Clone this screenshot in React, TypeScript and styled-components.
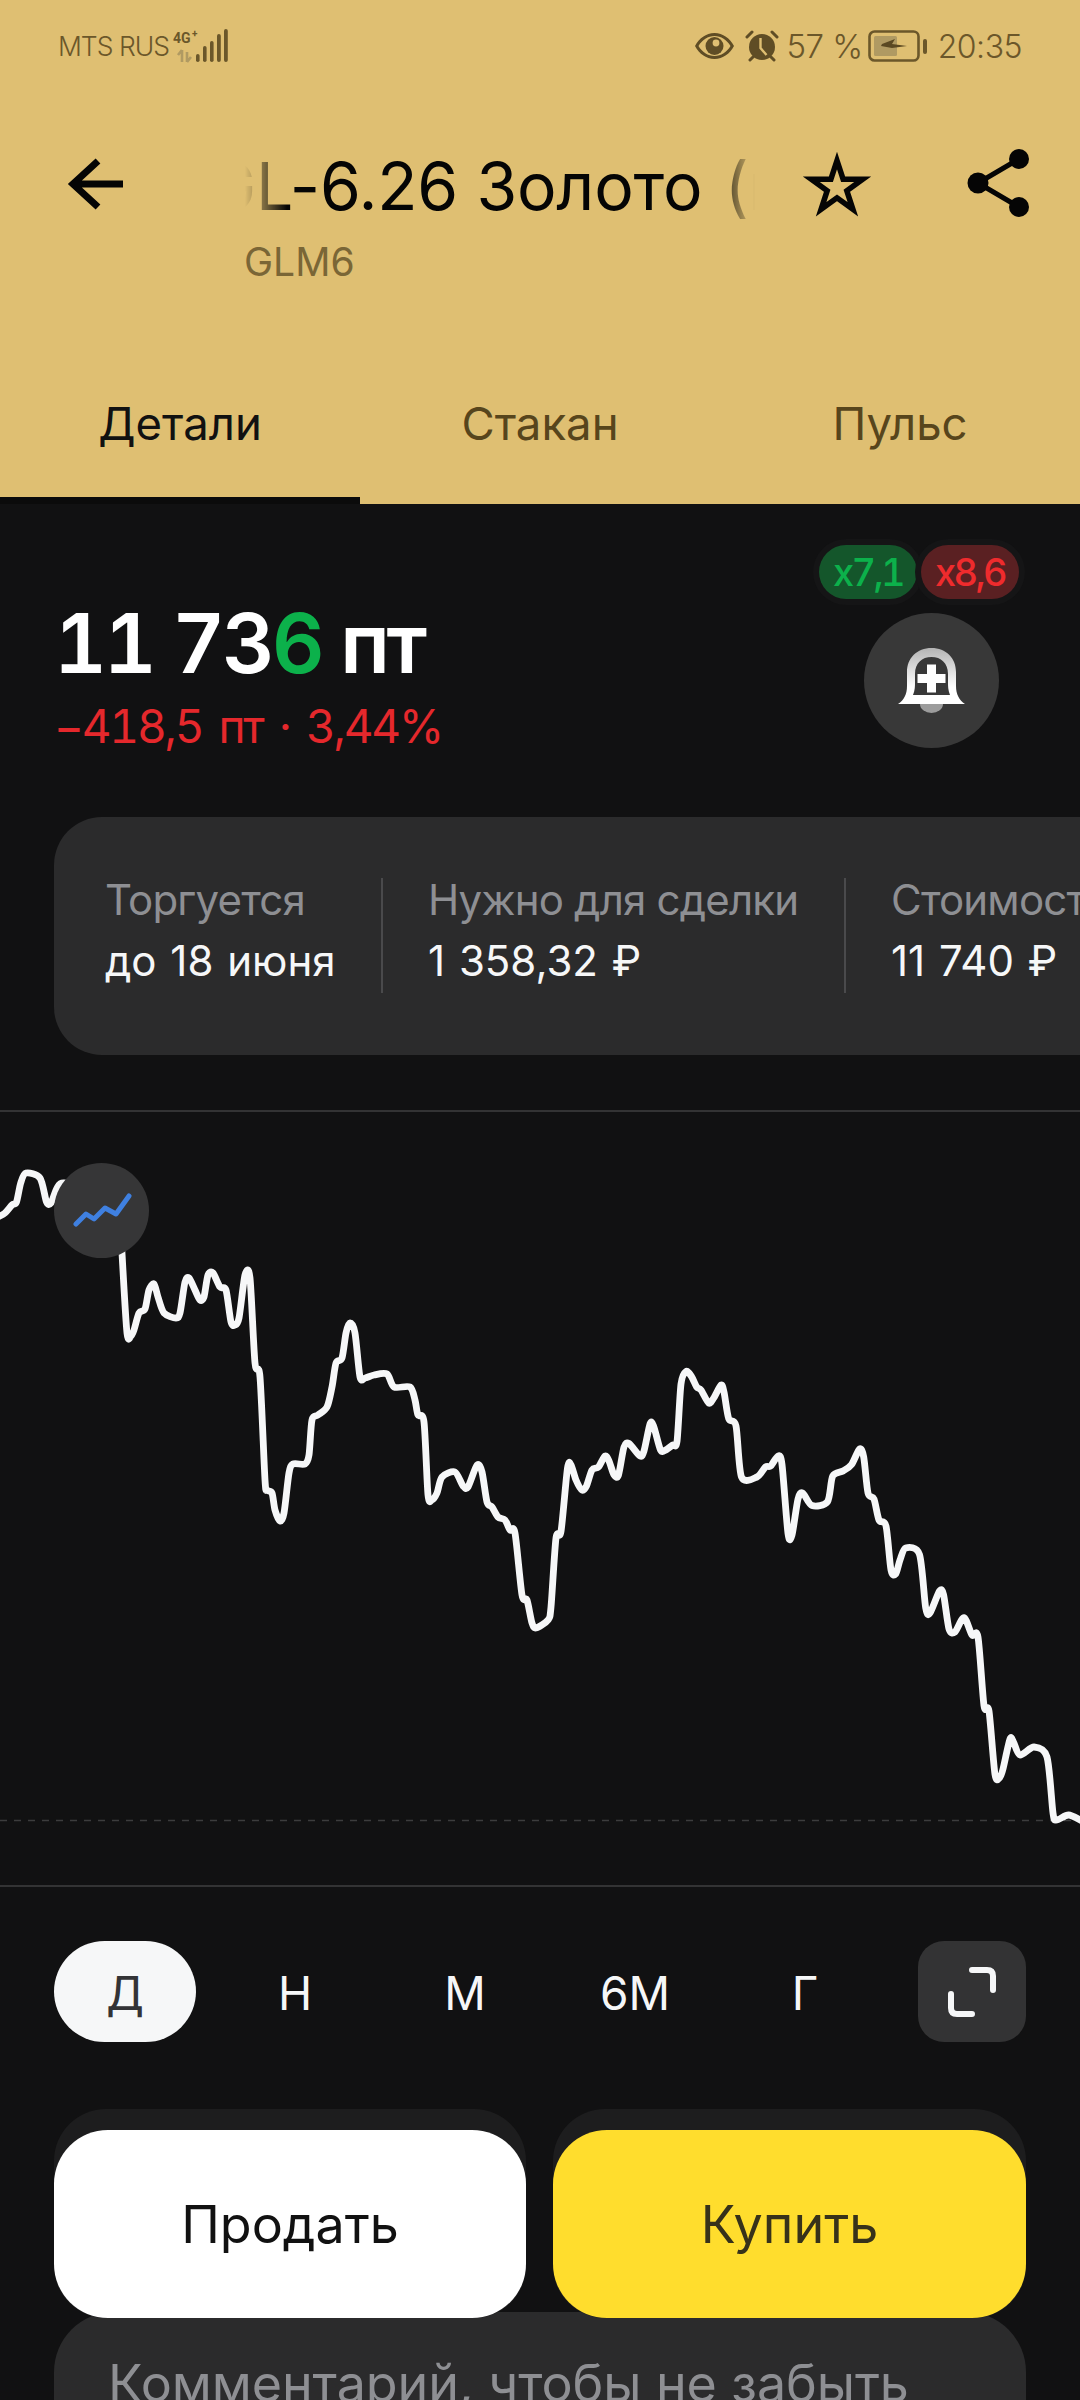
import React from "react";
import styled, { createGlobalStyle } from "styled-components";

const Global = createGlobalStyle`
  html, body { margin: 0; padding: 0; background: #111112; width: 1080px; height: 2400px; overflow: hidden; }
  #root { width: 1080px; height: 2400px; overflow: hidden; }
  * { box-sizing: border-box; }
`;

const Page = styled.div`
  width: 1080px; height: 2400px; overflow: hidden; background: #111112;
  font-family: Inter, "Noto Sans", sans-serif; color: #fff;
`;
const Header = styled.header`
  background: #dfbf72; height: 504px; display: flex; flex-direction: column;
`;
const StatusBar = styled.div`
  height: 92px; display: flex; align-items: center; justify-content: space-between;
  padding: 0 58px; color: #6b572a; font-size: 28px; font-weight: 300;
`;
const StatusGroup = styled.div`display: flex; align-items: center;`;
const Carrier = styled.span`font-size: 26.5px; letter-spacing: -1px;`;
const Percent = styled.span`font-size: 33px; margin: 0 5px 0 7px; letter-spacing: -0.5px;`;
const Clock = styled.span`font-size: 32px; margin-left: 10px; letter-spacing: -0.5px;`;
const NavBar = styled.div`
  display: grid; grid-template-columns: 245px 510px 1fr; height: 158px; padding-top: 53px;
`;
const BackCell = styled.div`padding: 12px 0 0 65px;`;
const TitleBlock = styled.div`display: flex; flex-direction: column; min-width: 0;`;
const TitleClip = styled.div`
  height: 82px; overflow: hidden; white-space: nowrap;
  mask-image: linear-gradient(90deg, transparent 0, #000 42px, #000 468px, transparent 510px);
`;
const TitleText = styled.div`
  font-size: 66px; line-height: 82px; color: #050505; margin-left: -38px; letter-spacing: -0.2px;
`;
const Paren = styled.span`margin-left: 4px;`;
const Ticker = styled.div`font-size: 39px; line-height: 46px; color: #7a6636; margin: 12px 0 0 -1px;`;
const Actions = styled.div`display: flex; align-items: flex-start; padding: 3px 0 0 46px; gap: 94px;`;
const Tabs = styled.nav`display: grid; grid-template-columns: repeat(3, 360px); margin-top: auto;`;
const Tab = styled.div<{ $active?: boolean }>`
  height: 154px; display: flex; align-items: center; justify-content: center;
  font-size: 45.5px; color: ${(p) => (p.$active ? "#111" : "#57451c")};
  border-bottom: 7px solid ${(p) => (p.$active ? "#0b0b0b" : "transparent")};
`;
const Quote = styled.section`
  height: 313px; display: flex; justify-content: space-between; padding: 41px 54px 0 54px;
`;
const PriceCol = styled.div`padding-top: 59px;`;
const Price = styled.div`
  font-size: 82px; line-height: 80px; font-weight: 600; font-variant-numeric: tabular-nums; letter-spacing: -3.3px;
`;
const LastDigit = styled.span`color: #0cb14b;`;
const Change = styled.div`
  font-size: 46px; line-height: 56px; color: #e5282c; margin-top: 14px; letter-spacing: -2.2px;
  font-variant-numeric: tabular-nums; word-spacing: 6px;
`;
const AlertCol = styled.div`display: flex; flex-direction: column; align-items: flex-end; padding-right: 7px;`;
const Pills = styled.div`display: flex; gap: 4px;`;
const Pill = styled.div<{ $up?: boolean }>`
  height: 54px; min-width: 98px; padding: 0 8px; border-radius: 27px; display: flex; align-items: center;
  justify-content: center; font-size: 38px; font-weight: 500; font-variant-numeric: tabular-nums; letter-spacing: -2.6px;
  color: ${(p) => (p.$up ? "#0cb14b" : "#ef2b2d")};
  background: ${(p) => (p.$up ? "#14562b" : "#5a2022")};
  box-shadow: 0 0 0 6px #151516;
`;
const BellButton = styled.div`
  width: 135px; height: 135px; border-radius: 50%; background: #383838; margin: 14px 20px 0 0;
  display: flex; align-items: center; justify-content: center;
`;
const StatsCard = styled.section`
  margin-left: 54px; width: 1100px; height: 238px; background: #2b2b2c; border-radius: 48px 0 0 48px;
  display: flex; align-items: center; padding: 0 0 2px 51px;
`;
const Stat = styled.div<{ $w: number }>`
  width: ${(p) => p.$w}px; flex: none; margin-top: -6px;
`;
const StatLabel = styled.div`
  font-size: 42px; line-height: 58px; color: #8e8f93; white-space: nowrap; letter-spacing: -0.8px;
`;
const StatValue = styled.div`
  font-size: 42px; line-height: 64px; color: #f6f7f8; white-space: nowrap; word-spacing: 2px;
`;
const StatDivider = styled.div`width: 2px; height: 115px; background: #4a4a4c; flex: none; margin: 0 45px 0 0;`;
const Chart = styled.section`
  position: relative; margin-top: 55px; height: 777px;
  border-top: 2px solid #333334; border-bottom: 2px solid #333334;
`;
const ChartSvg = styled.svg`display: block; width: 1080px; height: 773px;`;
const ChartToggle = styled.div`
  position: absolute; left: 54px; top: 51px; width: 95px; height: 95px; border-radius: 50%;
  background: #363637; display: flex; align-items: center; justify-content: center;
`;
const Periods = styled.div`display: flex; gap: 28px; padding: 54px 54px 0;`;
const Period = styled.div<{ $active?: boolean }>`
  width: 142px; height: 101px; border-radius: 51px; display: flex; align-items: center; justify-content: center;
  font-size: 46px; padding-top: 2px; color: ${(p) => (p.$active ? "#333336" : "#f6f7f8")};
  background: ${(p) => (p.$active ? "#f6f7f8" : "transparent")};
`;
const Expand = styled.div`
  margin-left: auto; width: 108px; height: 101px; border-radius: 26px; background: #333334;
  display: flex; align-items: center; justify-content: center;
`;
const Trade = styled.div`
  position: relative; z-index: 1; display: grid; grid-template-columns: 472px 473px; gap: 27px;
  padding: 67px 54px 0;
`;
const TradeSlot = styled.div`background: #1d1d1e; border-radius: 52px; padding-top: 21px;`;
const TradeButton = styled.div<{ $buy?: boolean }>`
  height: 188px; border-radius: 54px; display: flex; align-items: center; justify-content: center;
  font-size: 52px; color: ${(p) => (p.$buy ? "#37321a" : "#111")};
  background: ${(p) => (p.$buy ? "#ffdd2d" : "#fff")};
`;
const Comment = styled.div`
  margin: -6px 54px 0; height: 140px; border-radius: 60px 60px 0 0; background: #2b2b2c;
  padding: 42px 0 0 54px; font-size: 52px; line-height: 60px; color: #8e8f93; white-space: nowrap; letter-spacing: -0.1px;
`;

const pts: [number, number][] = [
  [-2,1217],[5,1213],[12,1205],[16.5,1202],[20.7,1183],[26,1173],[40,1178],[46.5,1202],[51,1203],[57,1188],[64,1183],[90,1190],[116,1200],[121,1235],[122,1253],
  [127,1333],[131,1336],[134,1330],[139,1313],[145,1309],[149,1290],[154,1284],[158,1297],[164,1313],[176,1318],[180,1313],[185,1282],[189,1278],[195,1290],[200,1300],[204,1297],[208,1275],[213,1273],[220,1287],[226,1290],[231,1322],[235,1325],[239,1318],[245,1275],[250,1278],[255,1363],[260,1377],[265,1480],
  [267,1490],[272,1493],[275,1510],[280,1521],[284,1513],[289,1473],[293,1464],[305,1464],[309,1455],[312,1420],[318,1415],[327,1407],[332,1387],[336,1363],[342,1358],[346,1333],[350,1323],[355,1333],[360,1377],[365,1378],[374,1375],[387,1374],[394,1387],[410,1387],[415,1400],[418,1415],[424,1422],
  [428,1495],[432,1500],[437,1493],[442,1477],[455,1472],[463,1486],[468,1487],[477,1465],[482,1472],[487,1502],[492,1507],[498,1517],[505,1520],[510,1530],[515,1533],[522,1595],[527,1600],[532,1623],[536,1628],[548,1620],[551,1607],[556,1538],[561,1531.5],
  [567.5,1468],[571,1465],[576,1480],[582,1490],[586.5,1486],[592,1470],[598.5,1467],[605,1456],[609,1461],[614,1475],[618.5,1475],[624,1447],[629,1443.5],[640,1456],[644,1451],[650,1424],[653.6,1426],[660.5,1450],[665.7,1450],[672.6,1445],[677,1441.6],[681,1384],[686,1371.5],[691.5,1376.5],[696.7,1387],[701,1390],[708.7,1403],[714,1397.6],[721,1385],[724,1392],[728.7,1418.6],[736,1426],[741.5,1477],[757,1477],[765.5,1467],[770.7,1466],[778,1456],[782,1464.5],[788,1533.5],[792,1535],[798,1499],[802.7,1493],[812,1505.5],[827.5,1501.7],[832.7,1476],[843,1471],[851.6,1464.5],[859.6,1449],[863.7,1457],[868,1493],[874,1499],[879,1520],[886,1526],[891,1570],[895.7,1574],[900,1560],[905.7,1548],[919.5,1554.5],[925.7,1608],[930,1613],[939.5,1591],[943.6,1594.7],[949,1629],[955,1632],[964,1617.6],[972,1635],[978,1637],[984,1705.7],[989,1711],[995,1774.5],[999.7,1777.6],[1003,1769],[1010,1739],[1013.5,1742],[1020,1755],[1034,1747],[1047,1757],[1053,1813],[1056.5,1820],[1068.6,1815],[1082,1821],
];

function smooth(p: [number, number][]): string {
  let d = `M${p[0][0]} ${p[0][1]}`;
  const k = 0.14;
  for (let i = 0; i < p.length - 1; i++) {
    const a = p[Math.max(0, i - 1)], b = p[i], c = p[i + 1], e = p[Math.min(p.length - 1, i + 2)];
    d += `C${(b[0] + (c[0] - a[0]) * k).toFixed(1)} ${(b[1] + (c[1] - a[1]) * k).toFixed(1)} ${(c[0] - (e[0] - b[0]) * k).toFixed(1)} ${(c[1] - (e[1] - b[1]) * k).toFixed(1)} ${c[0]} ${c[1]}`;
  }
  return d;
}

const SignalSvg = styled.svg`margin-left: 3px;`;
const EyeSvg = styled.svg`margin-right: 11px;`;

const Signal = () => (
  <SignalSvg width="62" height="36" viewBox="0 0 62 36">
    <text x="1" y="15" fontFamily="Roboto, sans-serif" fontWeight="700" fontSize="14" fill="#6b572a">4G</text>
    <text x="20" y="9" fontFamily="Roboto, sans-serif" fontWeight="700" fontSize="10" fill="#6b572a">+</text>
    <path d="M10 34V22M10 22l-4 5M15 24v10M15 34l4-5" stroke="#b09a62" strokeWidth="2.6" fill="none" />
    <g fill="#6b572a">
      <rect x="24" y="26" width="3.6" height="8" rx="1.8" />
      <rect x="31" y="18" width="3.6" height="16" rx="1.8" />
      <rect x="38" y="13" width="3.6" height="21" rx="1.8" />
      <rect x="45" y="6" width="3.8" height="28" rx="1.9" />
      <rect x="52" y="1" width="3.8" height="33" rx="1.9" />
    </g>
  </SignalSvg>
);
const Eye = () => (
  <EyeSvg width="39" height="26" viewBox="0 0 39 26">
    <path fillRule="evenodd" fill="#5f4d25" d="M19.500 0C28 0 35 5.500 39 13 35 20.500 28 26 19.500 26S4 20.500 0 13C4 5.500 11 0 19.500 0ZM19.500 3C13 3 7 7 3.500 13 7 19 13 23 19.500 23S32 19 35.500 13C32 7 26 3 19.500 3Z" />
    <circle cx="19.500" cy="13" r="9" fill="#5f4d25" />
    <circle cx="21" cy="10" r="3.400" fill="#dfbf72" />
  </EyeSvg>
);
const Alarm = () => (
  <svg width="34" height="32" viewBox="0 0 34 32">
    <circle cx="17" cy="17" r="13" fill="#5f4d25" />
    <path d="M15.500 8v10l6 7" stroke="#dfbf72" strokeWidth="2.400" fill="none" />
    <path d="M2 7l5-5M32 7l-5-5M5 30l3-3M29 30l-3-3" stroke="#5f4d25" strokeWidth="3" strokeLinecap="round" fill="none" />
  </svg>
);
const Battery = () => (
  <svg width="60" height="32" viewBox="0 0 60 32">
    <rect x="1.500" y="1.500" width="49" height="29" rx="5" fill="none" stroke="#6b572a" strokeWidth="2.600" />
    <rect x="6" y="6" width="23" height="20" rx="1.500" fill="#b09a62" />
    <path d="M14 14l13-5-3 5 15 2-15 2-11-2z" fill="#5a4822" />
    <rect x="55" y="9" width="4" height="15" rx="2" fill="#6b572a" />
  </svg>
);
const Back = () => (
  <svg width="60" height="56" viewBox="0 0 60 56">
    <path d="M8 27h50M33 4 8 27l25 23" fill="none" stroke="#050505" strokeWidth="7" />
  </svg>
);
const Star = () => (
  <svg width="72" height="72" viewBox="0 0 72 72">
    <path d="M36 12.500 42.100 31.200 61.700 31.200 45.800 42.700 51.900 61.300 36 49.800 20.100 61.300 26.200 42.700 10.300 31.200 29.900 31.200Z" fill="none" stroke="#050505" strokeWidth="5.500" />
  </svg>
);
const Share = () => (
  <svg width="64" height="72" viewBox="0 0 64 72">
    <path d="M52 11 11 35 52 59" fill="none" stroke="#050505" strokeWidth="5" />
    <circle cx="52" cy="11" r="10" fill="#050505" />
    <circle cx="11" cy="35" r="10.500" fill="#050505" />
    <circle cx="52" cy="59" r="10" fill="#050505" />
  </svg>
);
const Bell = () => (
  <svg width="67" height="66" viewBox="0 0 67 66">
    <defs>
      <linearGradient id="bellFill" x1="0" y1="0" x2="0" y2="1">
        <stop offset="0" stopColor="#b4b4b4" />
        <stop offset="0.7" stopColor="#ffffff" />
      </linearGradient>
    </defs>
    <path fill="#9c9c9c" d="M22 56h23a11.500 9 0 0 1-23 0Z" />
    <path fill="url(#bellFill)" fillRule="evenodd" d="M0 56C6 52 9 46 9 38V24C9 10 19 0 33.500 0S58 10 58 24V38C58 46 61 52 67 56ZM15 47H52C50 42 50 38 50 34V26C50 15 43 9 33.500 9S17 15 17 26V34C17 38 17 42 15 47Z" />
    <path fill="#fff" d="M29 16.500h9V26h9.500v9H38v9.500h-9V35h-9.500v-9H29Z" />
  </svg>
);
const Trend = () => (
  <svg width="60" height="40" viewBox="0 0 60 40">
    <path d="M4 33 14 23 22 28 33 17 44 23 57 5" fill="none" stroke="#3f80e0" strokeWidth="5" strokeLinecap="round" strokeLinejoin="round" />
  </svg>
);
const ExpandIcon = () => (
  <svg width="50" height="50" viewBox="0 0 50 50">
    <path d="M25 3H40Q46 3 46 9V23M4 27V41Q4 47 10 47H25" fill="none" stroke="#f6f7f8" strokeWidth="6" strokeLinecap="round" />
  </svg>
);

export default function App() {
  return (
    <Page>
      <Global />
      <Header>
        <StatusBar>
          <StatusGroup>
            <Carrier>MTS RUS</Carrier>
            <Signal />
          </StatusGroup>
          <StatusGroup>
            <Eye />
            <Alarm />
            <Percent>57 %</Percent>
            <Battery />
            <Clock>20:35</Clock>
          </StatusGroup>
        </StatusBar>
        <NavBar>
          <BackCell><Back /></BackCell>
          <TitleBlock>
            <TitleClip><TitleText>GL-6.26 Золото <Paren>(мини)</Paren></TitleText></TitleClip>
            <Ticker>GLM6</Ticker>
          </TitleBlock>
          <Actions>
            <Star />
            <Share />
          </Actions>
        </NavBar>
        <Tabs>
          <Tab $active>Детали</Tab>
          <Tab>Стакан</Tab>
          <Tab>Пульс</Tab>
        </Tabs>
      </Header>
      <Quote>
        <PriceCol>
          <Price>11 73<LastDigit>6</LastDigit> пт</Price>
          <Change>−418,5 пт · 3,44%</Change>
        </PriceCol>
        <AlertCol>
          <Pills>
            <Pill $up>x7,1</Pill>
            <Pill>x8,6</Pill>
          </Pills>
          <BellButton><Bell /></BellButton>
        </AlertCol>
      </Quote>
      <StatsCard>
        <Stat $w={276}>
          <StatLabel>Торгуется</StatLabel>
          <StatValue>до 18 июня</StatValue>
        </Stat>
        <StatDivider />
        <Stat $w={416}>
          <StatLabel>Нужно для сделки</StatLabel>
          <StatValue>1 358,32 ₽</StatValue>
        </Stat>
        <StatDivider />
        <Stat $w={300}>
          <StatLabel>Стоимость</StatLabel>
          <StatValue>11 740 ₽</StatValue>
        </Stat>
      </StatsCard>
      <Chart>
        <ChartSvg viewBox="0 1112 1080 773">
          <line x1="0" x2="1080" y1="1820.500" y2="1820.500" stroke="#3c3c3d" strokeWidth="1.500" strokeDasharray="7 7" />
          <path d={smooth(pts)} fill="none" stroke="#f6f7f8" strokeWidth="6.800" strokeLinejoin="round" strokeLinecap="round" />
        </ChartSvg>
        <ChartToggle><Trend /></ChartToggle>
      </Chart>
      <Periods>
        <Period $active>Д</Period>
        <Period>Н</Period>
        <Period>М</Period>
        <Period>6М</Period>
        <Period>Г</Period>
        <Expand><ExpandIcon /></Expand>
      </Periods>
      <Trade>
        <TradeSlot><TradeButton>Продать</TradeButton></TradeSlot>
        <TradeSlot><TradeButton $buy>Купить</TradeButton></TradeSlot>
      </Trade>
      <Comment>Комментарий, чтобы не забыть</Comment>
    </Page>
  );
}
